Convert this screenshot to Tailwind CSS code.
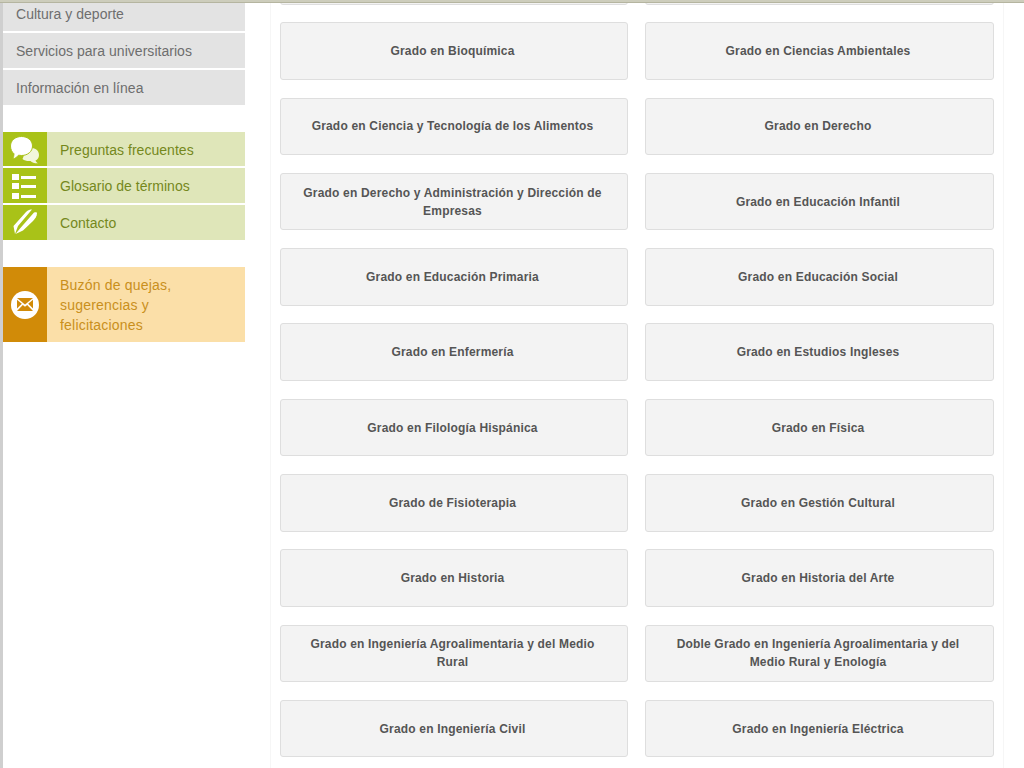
<!DOCTYPE html>
<html lang="es">
<head>
    <meta charset="UTF-8">
    <title>Grados</title>
    <script src="https://cdn.jsdelivr.net/npm/@tailwindcss/browser@4"></script>
</head>
<body class="h-[768px] overflow-hidden bg-white font-['Liberation_Sans',Arial,sans-serif]">
    <div class="h-[3px] bg-[#cdcdbc] border-b border-[#b5b5a0]"></div>
    <div class="flex h-[765px] overflow-hidden">
        <div class="w-[3px] shrink-0 bg-[#cfcfcf]"></div>

        <!-- sidebar -->
        <aside class="w-[242px] shrink-0 text-[14px] tracking-[0.03px]">
            <ul class="flex flex-col gap-[2px] text-[#6e6e6e]">
                <li class="h-[28px] bg-[#e3e3e3] pl-[13px] leading-[22px]">Cultura y deporte</li>
                <li class="h-[35px] bg-[#e3e3e3] pl-[13px] leading-[37px]">Servicios para universitarios</li>
                <li class="h-[35px] bg-[#e3e3e3] pl-[13px] leading-[37px]">Información en línea</li>
            </ul>

            <ul class="mt-[27px] flex flex-col gap-[2px] text-[#75881c]">
                <li class="flex h-[34px] bg-[#dfe6b9]">
                    <span class="w-[44px] bg-[#a9c218]">
                        <svg width="44" height="34" viewBox="0 0 44 34">
                            <path d="M24 16c6-1 12 1 12 7 0 3-1.500 4.500-3.500 5.500.3 1 1.300 2 2.500 2.800-3 .2-6-.8-7.500-2.300-3 .3-6-.3-8-2z" fill="#fff" opacity=".85"/>
                            <path d="M18.500 4.500c6.200 0 11 4 11 9.500s-4.800 9.500-11 9.500c-1 0-2-.1-3-.3-1.500 2-3.500 3.300-6 3.800 1-1.500 1.500-3 1.500-5.200C8.800 20 7.500 17.200 7.500 14c0-5.500 4.800-9.500 11-9.500z" fill="#fff" stroke="#a9c218" stroke-width="1"/>
                        </svg>
                    </span>
                    <span class="pl-[13px] leading-[36px]">Preguntas frecuentes</span>
                </li>
                <li class="flex h-[35px] bg-[#dfe6b9]">
                    <span class="w-[44px] bg-[#a9c218]">
                        <svg width="44" height="35" viewBox="0 0 44 35" fill="#fff">
                            <rect x="9" y="6" width="7" height="6"/><rect x="18" y="8" width="15" height="3"/>
                            <rect x="9" y="15" width="7" height="6"/><rect x="18" y="17" width="15" height="3"/>
                            <rect x="9" y="25" width="7" height="6"/><rect x="18" y="27" width="15" height="3"/>
                        </svg>
                    </span>
                    <span class="pl-[13px] leading-[36px]">Glosario de términos</span>
                </li>
                <li class="flex h-[35px] bg-[#dfe6b9]">
                    <span class="w-[44px] bg-[#a9c218]">
                        <svg width="44" height="35" viewBox="0 0 44 35" fill="#fff">
                            <path d="M12 29l-1.500-8L23 7c2-2 4-2.500 6-2.500L15 21z"/>
                            <path d="M12.500 29l4.500-5.500L31 7.500c2-.5 3-.5 3 .5 0 3-2 6-4 8L20 25.500z"/>
                        </svg>
                    </span>
                    <span class="pl-[13px] leading-[36px]">Contacto</span>
                </li>
            </ul>

            <div class="mt-[27px] flex h-[75px] bg-[#fbdfa8] text-[#c98f1c]">
                <span class="flex w-[44px] items-center justify-center bg-[#d18b08]">
                    <span class="flex h-[28px] w-[28px] items-center justify-center rounded-full bg-white">
                        <svg width="16" height="13" viewBox="0 0 16 13" fill="#d18b08">
                            <path d="M0 0h16L8 6.500z"/>
                            <path d="M0 1.800l4.800 4L0 10.500z"/>
                            <path d="M16 1.800l-4.800 4 4.800 4.700z"/>
                            <path d="M0 13l5.800-6L8 8.800 10.200 7 16 13z"/>
                        </svg>
                    </span>
                </span>
                <p class="pl-[13px] pt-[8px] leading-[20px] tracking-[0.2px]">Buzón de quejas,<br>sugerencias y<br>felicitaciones</p>
            </div>
        </aside>

        <!-- grados -->
        <main class="ml-[25px] w-[734px] shrink-0 border-x border-[#f6f6f6] px-[9px]">
            <div class="-mt-[56px] grid grid-cols-[348px_349px] gap-x-[17px] gap-y-[17.8px] text-center text-[12px] font-bold leading-[18px] tracking-[0.18px] text-[#555]">
                <a class="flex h-[57.5px] items-center justify-center rounded-[3px] border border-[#dedede] bg-[#f3f3f3] pl-[18px] pr-[21px]"></a>
                <a class="flex h-[57.5px] items-center justify-center rounded-[3px] border border-[#dedede] bg-[#f3f3f3] pl-[18px] pr-[21px]"></a>
                <a class="flex h-[57.5px] items-center justify-center rounded-[3px] border border-[#dedede] bg-[#f3f3f3] pl-[18px] pr-[21px]">Grado en Bioquímica</a>
                <a class="flex h-[57.5px] items-center justify-center rounded-[3px] border border-[#dedede] bg-[#f3f3f3] pl-[18px] pr-[21px]">Grado en Ciencias Ambientales</a>
                <a class="flex h-[57.5px] items-center justify-center rounded-[3px] border border-[#dedede] bg-[#f3f3f3] pl-[18px] pr-[21px]">Grado en Ciencia y Tecnología de los Alimentos</a>
                <a class="flex h-[57.5px] items-center justify-center rounded-[3px] border border-[#dedede] bg-[#f3f3f3] pl-[18px] pr-[21px]">Grado en Derecho</a>
                <a class="flex h-[57.5px] items-center justify-center rounded-[3px] border border-[#dedede] bg-[#f3f3f3] pl-[18px] pr-[21px]">Grado en Derecho y Administración y Dirección de Empresas</a>
                <a class="flex h-[57.5px] items-center justify-center rounded-[3px] border border-[#dedede] bg-[#f3f3f3] pl-[18px] pr-[21px]">Grado en Educación Infantil</a>
                <a class="flex h-[57.5px] items-center justify-center rounded-[3px] border border-[#dedede] bg-[#f3f3f3] pl-[18px] pr-[21px]">Grado en Educación Primaria</a>
                <a class="flex h-[57.5px] items-center justify-center rounded-[3px] border border-[#dedede] bg-[#f3f3f3] pl-[18px] pr-[21px]">Grado en Educación Social</a>
                <a class="flex h-[57.5px] items-center justify-center rounded-[3px] border border-[#dedede] bg-[#f3f3f3] pl-[18px] pr-[21px]">Grado en Enfermería</a>
                <a class="flex h-[57.5px] items-center justify-center rounded-[3px] border border-[#dedede] bg-[#f3f3f3] pl-[18px] pr-[21px]">Grado en Estudios Ingleses</a>
                <a class="flex h-[57.5px] items-center justify-center rounded-[3px] border border-[#dedede] bg-[#f3f3f3] pl-[18px] pr-[21px]">Grado en Filología Hispánica</a>
                <a class="flex h-[57.5px] items-center justify-center rounded-[3px] border border-[#dedede] bg-[#f3f3f3] pl-[18px] pr-[21px]">Grado en Física</a>
                <a class="flex h-[57.5px] items-center justify-center rounded-[3px] border border-[#dedede] bg-[#f3f3f3] pl-[18px] pr-[21px]">Grado de Fisioterapia</a>
                <a class="flex h-[57.5px] items-center justify-center rounded-[3px] border border-[#dedede] bg-[#f3f3f3] pl-[18px] pr-[21px]">Grado en Gestión Cultural</a>
                <a class="flex h-[57.5px] items-center justify-center rounded-[3px] border border-[#dedede] bg-[#f3f3f3] pl-[18px] pr-[21px]">Grado en Historia</a>
                <a class="flex h-[57.5px] items-center justify-center rounded-[3px] border border-[#dedede] bg-[#f3f3f3] pl-[18px] pr-[21px]">Grado en Historia del Arte</a>
                <a class="flex h-[57.5px] items-center justify-center rounded-[3px] border border-[#dedede] bg-[#f3f3f3] pl-[18px] pr-[21px]">Grado en Ingeniería Agroalimentaria y del Medio Rural</a>
                <a class="flex h-[57.5px] items-center justify-center rounded-[3px] border border-[#dedede] bg-[#f3f3f3] pl-[18px] pr-[21px]">Doble Grado en Ingeniería Agroalimentaria y del Medio Rural y Enología</a>
                <a class="flex h-[57.5px] items-center justify-center rounded-[3px] border border-[#dedede] bg-[#f3f3f3] pl-[18px] pr-[21px]">Grado en Ingeniería Civil</a>
                <a class="flex h-[57.5px] items-center justify-center rounded-[3px] border border-[#dedede] bg-[#f3f3f3] pl-[18px] pr-[21px]">Grado en Ingeniería Eléctrica</a>
            </div>
        </main>
    </div>
</body>
</html>
